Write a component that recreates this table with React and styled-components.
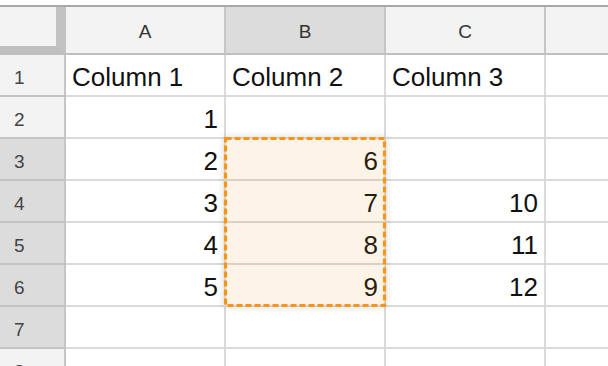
import React from "react";
import styled, { createGlobalStyle } from "styled-components";

const GlobalStyle = createGlobalStyle`
  html, body {
    margin: 0;
    padding: 0;
    background: #ffffff;
  }
  body {
    font-family: "Liberation Sans", Arial, sans-serif;
  }
`;

const ROW_HEADER_W = 66;
const COL_W = 160;
const HEAD_H = 48;
const ROW_H = 42;
const TOP_GAP = 5;

const Viewport = styled.div`
  position: relative;
  width: 100vw;
  height: 100vh;
  overflow: hidden;
  padding-top: ${TOP_GAP}px;
  box-sizing: border-box;
`;

const Grid = styled.div`
  display: grid;
  grid-template-columns: ${ROW_HEADER_W}px repeat(4, ${COL_W}px);
  grid-template-rows: ${HEAD_H}px;
  grid-auto-rows: ${ROW_H}px;
  border-top: 2px solid #a8a8a8;
  width: max-content;
`;

const Corner = styled.div`
  box-sizing: border-box;
  background: #f3f3f3;
  border-right: 10px solid #c2c2c2;
  border-bottom: 9px solid #bfbfbf;
`;

const ColHeader = styled.div`
  box-sizing: border-box;
  display: flex;
  align-items: center;
  justify-content: center;
  padding-top: 3px;
  background: ${(p) => (p.$active ? "#dcdcdc" : "#f3f3f3")};
  border-right: 2px solid #c6c6c6;
  border-bottom: 2px solid #bfbfbf;
  color: #333333;
  font-size: 19px;
`;

const RowHeader = styled.div`
  box-sizing: border-box;
  display: flex;
  align-items: center;
  padding: 5px 0 0 14px;
  background: ${(p) => (p.$active ? "#dcdcdc" : "#f3f3f3")};
  border-right: 2px solid #c4c4c4;
  border-bottom: 2px solid #c4c4c4;
  color: #444444;
  font-size: 19px;
`;

const Cell = styled.div`
  box-sizing: border-box;
  display: flex;
  align-items: center;
  justify-content: ${(p) => (p.$numeric ? "flex-end" : "flex-start")};
  padding: 5px 6px 0 6px;
  border-right: 2px solid #dadada;
  border-bottom: 2px solid #dadada;
  color: #111111;
  font-size: 26px;
  white-space: nowrap;
  overflow: hidden;
`;

const Selection = styled.div`
  position: absolute;
  pointer-events: none;
  background: rgba(232, 150, 20, 0.1);
  box-shadow: 0 0 7px rgba(0, 0, 0, 0.16);
`;

const Ants = styled.svg`
  display: block;
  width: 100%;
  height: 100%;
  overflow: visible;
`;

const columns = ["A", "B", "C", ""];

const rows = [
  ["Column 1", "Column 2", "Column 3", ""],
  [1, "", "", ""],
  [2, 6, "", ""],
  [3, 7, 10, ""],
  [4, 8, 11, ""],
  [5, 9, 12, ""],
  ["", "", "", ""],
  ["", "", "", ""],
];

const activeCol = 1;
const activeRows = [3, 4, 5, 6, 7];
const sel = { col: 1, from: 3, to: 6 };

function SelectionBox() {
  const left = ROW_HEADER_W + sel.col * COL_W - 2;
  const top = TOP_GAP + 2 + HEAD_H + (sel.from - 1) * ROW_H - 2;
  const width = COL_W + 2;
  const height = (sel.to - sel.from + 1) * ROW_H + 2;
  return (
    <Selection style={{ left, top, width, height }}>
      <Ants viewBox={`0 0 ${width} ${height}`}>
        <rect
          x="1.5"
          y="1.5"
          width={width - 3}
          height={height - 3}
          fill="none"
          stroke="#f5961a"
          strokeWidth="3.2"
          strokeDasharray="6 3"
        />
      </Ants>
    </Selection>
  );
}

export default function App() {
  return (
    <>
      <GlobalStyle />
      <Viewport>
        <Grid>
          <Corner />
          {columns.map((c, i) => (
            <ColHeader key={i} $active={i === activeCol}>
              {c}
            </ColHeader>
          ))}
          {rows.map((row, r) => (
            <React.Fragment key={r}>
              <RowHeader $active={activeRows.includes(r + 1)}>{r + 1}</RowHeader>
              {row.map((v, c) => (
                <Cell key={c} $numeric={typeof v === "number"}>
                  {v}
                </Cell>
              ))}
            </React.Fragment>
          ))}
        </Grid>
        <SelectionBox />
      </Viewport>
    </>
  );
}
